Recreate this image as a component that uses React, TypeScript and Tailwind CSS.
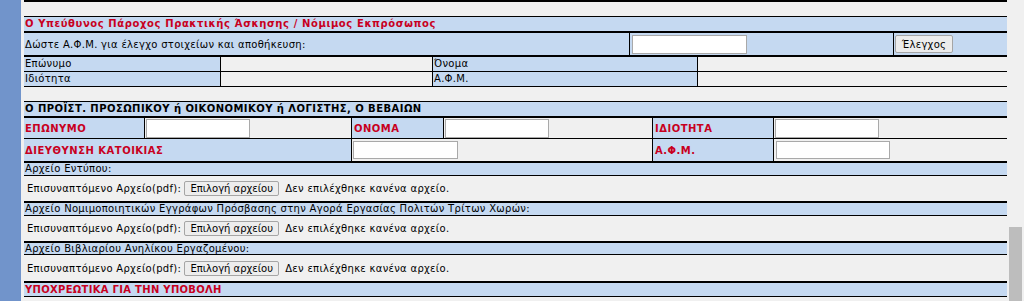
import React from "react";

const blue = "bg-[#c5d9f1]";

function FileRow({ h }: { h: string }) {
  return (
    <div className={`flex items-center ${h} bg-[#f0f0f0] pl-[3px]`}>
      <span>Επισυναπτόμενο Αρχείο(pdf):</span>
      <button className="ml-[3px] w-[95px] h-[15px] border border-[#a5a5a5] bg-[#ededed] rounded-[2px] text-[10px] leading-[13px] tracking-normal text-black">
        Επιλογή αρχείου
      </button>
      <span className="ml-[6px]">Δεν επιλέχθηκε κανένα αρχείο.</span>
    </div>
  );
}

function Input({ w, h }: { w: string; h: string }) {
  return <input className={`${w} ${h} border border-[#a9a9a9] bg-white outline-none`} />;
}

export default function App() {
  return (
    <div
      className="flex h-[301px] w-[1024px] overflow-hidden bg-[#f0f0f0] text-[10px] tracking-[0.3px] text-black"
      style={{ fontFamily: '"DejaVu Sans", Verdana, sans-serif' }}
    >
      <div className="w-[21px] shrink-0 bg-[#7194cb]" />
      <div className="w-[3px] shrink-0" />

      <div className="flex w-[983px] shrink-0 flex-col">
        <div className="h-[2px] bg-black" />
        <div className="h-[14px]" />

        {/* Υπεύθυνος Πάροχος */}
        <div className="border-t border-black">
          <div className={`${blue} h-[14px] pl-[1px] font-bold leading-[14px] tracking-[0.6px] text-[#c8001e]`}>
            Ο Υπεύθυνος Πάροχος Πρακτικής Άσκησης / Νόμιμος Εκπρόσωπος
          </div>
        </div>
        <div className={`flex h-[24px] border-t-2 border-black ${blue}`}>
          <div className="flex w-[605px] items-center pl-[1px]">Δώστε Α.Φ.Μ. για έλεγχο στοιχείων και αποθήκευση:</div>
          <div className="flex w-[264px] items-center border-l border-black pl-[2px]">
            <Input w="w-[115px]" h="h-[19px]" />
          </div>
          <div className="flex flex-1 items-center border-l border-black pl-[1px]">
            <button className="h-[18px] w-[58px] rounded-[2px] border border-[#a5a5a5] bg-[#ececec] text-[10px] text-black">
              Έλεγχος
            </button>
          </div>
        </div>
        <div className="flex h-[16px] border-t-2 border-black leading-[14px]">
          <div className={`w-[196px] ${blue} pl-[1px]`}>Επώνυμο</div>
          <div className="w-[212px] border-l border-black" />
          <div className={`w-[265px] border-l border-black ${blue} pl-[1px]`}>Όνομα</div>
          <div className="flex-1 border-l border-black" />
        </div>
        <div className="flex h-[15px] border-t border-black leading-[14px]">
          <div className={`w-[196px] ${blue} pl-[1px]`}>Ιδιότητα</div>
          <div className="w-[212px] border-l border-black" />
          <div className={`w-[265px] border-l border-black ${blue} pl-[1px]`}>Α.Φ.Μ.</div>
          <div className="flex-1 border-l border-black" />
        </div>
        <div className="border-t border-black" />

        <div className="h-[14px]" />

        {/* Προϊστάμενος */}
        <div className="border-t border-black">
          <div className={`${blue} h-[14px] pl-[1px] font-bold leading-[14px] tracking-[0.45px]`}>
            Ο ΠΡΟΪΣΤ. ΠΡΟΣΩΠΙΚΟΥ ή ΟΙΚΟΝΟΜΙΚΟΥ ή ΛΟΓΙΣΤΗΣ, Ο ΒΕΒΑΙΩΝ
          </div>
        </div>
        <div className="flex h-[22px] border-t-2 border-black font-bold tracking-[0.5px] text-[#c8001e]">
          <div className={`flex w-[120px] items-center ${blue} pl-[1px]`}>ΕΠΩΝΥΜΟ</div>
          <div className="flex w-[207px] items-center border-l border-black pl-[1px]">
            <Input w="w-[104px]" h="h-[19px]" />
          </div>
          <div className={`flex w-[92px] items-center border-l border-black ${blue} pl-[2px]`}>ΟΝΟΜΑ</div>
          <div className="flex w-[209px] items-center border-l border-black pl-[1px]">
            <Input w="w-[104px]" h="h-[19px]" />
          </div>
          <div className={`flex w-[121px] items-center border-l border-black ${blue} pl-[2px]`}>ΙΔΙΟΤΗΤΑ</div>
          <div className="flex flex-1 items-center border-l border-black pl-[1px]">
            <Input w="w-[104px]" h="h-[19px]" />
          </div>
        </div>
        <div className="flex h-[23px] border-t border-black font-bold tracking-[0.5px] text-[#c8001e]">
          <div className={`flex w-[327px] items-center ${blue} pl-[1px]`}>ΔΙΕΥΘΥΝΣΗ ΚΑΤΟΙΚΙΑΣ</div>
          <div className="flex w-[301px] items-center border-l border-black pl-[1px]">
            <Input w="w-[105px]" h="h-[18px]" />
          </div>
          <div className={`flex w-[121px] items-center border-l border-black ${blue} pl-[2px]`}>Α.Φ.Μ.</div>
          <div className="flex flex-1 items-center border-l border-black pl-[2px]">
            <Input w="w-[114px]" h="h-[18px]" />
          </div>
        </div>

        <div className={`h-[14px] border-t-2 border-black ${blue} pl-[1px] leading-[12px]`}>Αρχείο Εντύπου:</div>
        <div className="border-t border-black">
          <FileRow h="h-[25px]" />
        </div>
        <div className={`h-[14px] border-t-2 border-black ${blue} pl-[1px] leading-[12px]`}>
          Αρχείο Νομιμοποιητικών Εγγράφων Πρόσβασης στην Αγορά Εργασίας Πολιτών Τρίτων Χωρών:
        </div>
        <div className="border-t border-black">
          <FileRow h="h-[25px]" />
        </div>
        <div className={`h-[13px] border-t-2 border-black ${blue} pl-[1px] leading-[11px]`}>
          Αρχείο Βιβλιαρίου Ανηλίκου Εργαζομένου:
        </div>
        <div className="border-t border-black">
          <FileRow h="h-[26px]" />
        </div>
        <div className={`h-[15px] border-t-2 border-black ${blue} pl-[1px] font-bold leading-[13px] tracking-[0.3px] text-[#c8001e]`}>
          ΥΠΟΧΡΕΩΤΙΚΑ ΓΙΑ ΤΗΝ ΥΠΟΒΟΛΗ
        </div>
        <div className="border-t border-black" />
      </div>

      {/* scrollbar */}
      <div className="flex w-[17px] shrink-0 flex-col pl-[2px] pr-[2px] pt-[227px]">
        <div className="flex-1 bg-[#bdbdbd]" />
      </div>
    </div>
  );
}
